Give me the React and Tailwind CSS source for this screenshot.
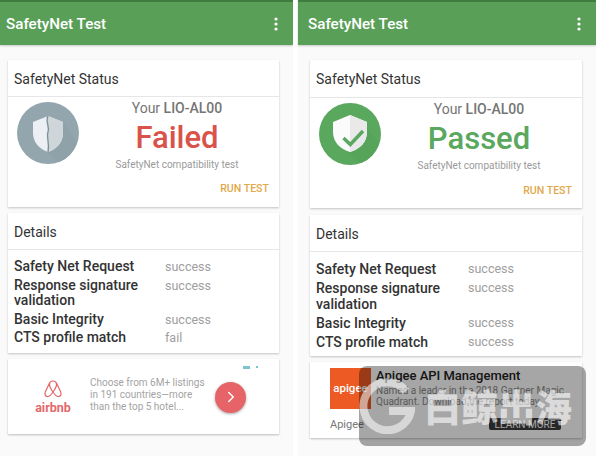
import React from 'react';
import { ChevronRight } from 'lucide-react';

const FailedIcon = () => (
    <svg width="62" height="62" viewBox="0 0 62 62" className="shrink-0">
        <circle cx="31" cy="31" r="31" fill="#93a6ae" />
        <path d="M46 20 L60 40 A31 31 0 0 1 42 60 L26 48 Z" fill="#8fa2aa" />
        <path d="M31 14 L46 20 V31 C46 40 40 47 31 50 C22 47 16 40 16 31 V20 Z" fill="#eceff3" />
        <path d="M31 14 L46 20 V31 C46 40 40 47 31 50 Z" fill="#cfd6da" />
        <path d="M31 14 C28 20 33 24 31 30 C29 35 33 41 31 50" fill="none" stroke="#7f929a" strokeWidth="1.4" />
    </svg>
);

const PassedIcon = () => (
    <svg width="62" height="62" viewBox="0 0 62 62" className="shrink-0">
        <circle cx="31" cy="31" r="31" fill="#5aa75e" />
        <path d="M46 22 L60 40 A31 31 0 0 1 42 60 L26 48 Z" fill="#56a35a" />
        <path d="M31 12 L48 19 V29 C48 39 41 46 31 49 C21 46 14 39 14 29 V19 Z" fill="#fbfbfb" />
        <path d="M31 12 L48 19 V29 C48 39 41 46 31 49 Z" fill="#e9e9e9" />
        <path d="M24.5 35 L31.3 41.5 L44 28" fill="none" stroke="#5aa75e" strokeWidth="3.4" />
    </svg>
);

const AdChoices = () => (
    <div className="flex justify-end gap-[6px] pr-[21px] pt-[7px] h-[12px]">
        <div className="w-[7px] h-[3px] bg-[#7cc4cf]" />
        <div className="w-[2px] h-[2px] bg-[#7cc4cf]" />
    </div>
);

const AirbnbAd = () => (
    <div className="h-[75px] bg-white shadow-[0_1px_2px_rgba(0,0,0,0.25)]">
        <AdChoices />
        <div className="flex items-center pl-[26px] pt-[6px]">
            <div className="flex flex-col items-center w-[38px] shrink-0">
                <svg width="18" height="19" viewBox="0 0 18 19" className="mb-[3px]">
                    <path d="M9 13 C6 9 5.5 7 5.5 5.5 C5.5 3.5 7 2 9 2 C11 2 12.5 3.5 12.5 5.5 C12.5 7 12 9 9 13 C7 16 4.5 18 3 17.5 C1 17 0.5 15 1.5 12.5 L5.5 4 M9 13 C11 16 13.5 18 15 17.5 C17 17 17.5 15 16.5 12.5 L12.5 4" fill="none" stroke="#e4686a" strokeWidth="1.2" />
                </svg>
                <span className="text-[12.5px] leading-[14px] font-bold text-[#e4686a]">airbnb</span>
            </div>
            <p className="ml-[18px] mb-[4px] w-[117px] text-[10px] leading-[12.2px] text-[#a3a3a3]">
                Choose from 6M+ listings in 191 countries—more than the top 5 hotel...
            </p>
            <div className="ml-[8px] w-[31px] h-[31px] rounded-full bg-[#e66467] flex items-center justify-center shadow-[0_1px_3px_rgba(0,0,0,0.35)]">
                <ChevronRight size={18} color="#ffffff" strokeWidth={2} />
            </div>
        </div>
    </div>
);

const ApigeeAd = () => (
    <div className="h-[76px] bg-white shadow-[0_1px_2px_rgba(0,0,0,0.25)] flex pl-[20px] pt-[6px]">
        <div className="w-[41px] shrink-0">
            <div className="h-[41px] bg-[#ee5a24] flex items-center justify-center">
                <span className="text-[11.5px] font-medium text-white">apigee</span>
            </div>
            <div className="mt-[9px] text-[11px] leading-[14px] text-[#777777]">Apigee</div>
        </div>
        <div className="ml-[5px] flex-1 pt-[1px]">
            <div className="text-[13px] leading-[14px] font-medium text-[#222222]">Apigee API Management</div>
            <p className="mt-[2px] whitespace-nowrap text-[10px] leading-[11px] text-[#8a8a8a]">
                Named a leader in the 2018 Gartner Magic<br />Quadrant. Download the report today.
            </p>
            <div className="mt-[11px] ml-[113px] w-[72px] h-[12px] rounded-[2px] bg-[#3d3d3d] flex items-center justify-center text-[10px] text-white">
                LEARN MORE
            </div>
        </div>
    </div>
);

const Card = ({ title, className, headClass, children }) => (
    <div className={`bg-white shadow-[0_1px_2px_rgba(0,0,0,0.22)] ${className}`}>
        <div className={`${headClass} flex items-center pl-[6px] pt-[2px] border-b border-[#e6e6e6] text-[14px] text-[#333333]`}>
            {title}
        </div>
        {children}
    </div>
);

const Panel = ({ width, titlePad, cardClass, statusClass, statusHead, runClass, detailsClass, rowLead, labelWidth, icon, result, resultClass, rows, ad }) => (
    <div className={`${width} h-full shrink-0 bg-[#fafafa]`}>
        <div className="h-[45px] pt-[1px] bg-[#5a9f58] border-t-2 border-[#3f7c40] shadow-[0_1px_2px_rgba(0,0,0,0.2)] flex items-center justify-between">
            <span className={`${titlePad} text-[15.2px] font-medium text-white`}>SafetyNet Test</span>
            <svg width="4" height="14" viewBox="0 0 4 14" className="mr-[15px]">
                <circle cx="2" cy="2" r="1.6" fill="#fff" />
                <circle cx="2" cy="7" r="1.6" fill="#fff" />
                <circle cx="2" cy="12" r="1.6" fill="#fff" />
            </svg>
        </div>
        <div className={`${cardClass} pt-[15px]`}>
            <Card title="SafetyNet Status" className={statusClass} headClass={statusHead}>
                <div className="flex pl-[9px] pt-[5px]">
                    {icon}
                    <div className="w-[196px] flex flex-col items-center">
                        <div className="text-[14px] leading-[16px] text-[#757575] mt-[-2px]">
                            Your <span className="font-medium">LIO-AL00</span>
                        </div>
                        <div className={`text-[31px] leading-[40px] font-medium mt-[2px] ${resultClass}`}>{result}</div>
                        <div className="text-[10px] leading-[14px] text-[#9a9a9a]">SafetyNet compatibility test</div>
                    </div>
                </div>
                <div className={`text-right pr-[10px] text-[10.6px] leading-[14px] font-medium text-[#e2a84a] ${runClass}`}>RUN TEST</div>
            </Card>
            <Card title="Details" className={detailsClass} headClass="h-[37px]">
                <div className="pl-[6px] pt-[9px] flex flex-col gap-[3px]">
                    {rows.map((row) => (
                        <div key={row.name} className="flex items-start">
                            <div className={`text-[14px] font-medium text-[#333333] ${labelWidth} ${rowLead}`}>{row.name}</div>
                            <div className={`text-[12.5px] text-[#9e9e9e] ${rowLead}`}>{row.value}</div>
                        </div>
                    ))}
                </div>
            </Card>
            {ad}
        </div>
    </div>
);

const failedRows = [
    { name: 'Safety Net Request', value: 'success' },
    { name: 'Response signature validation', value: 'success' },
    { name: 'Basic Integrity', value: 'success' },
    { name: 'CTS profile match', value: 'fail' },
];

const passedRows = [
    { name: 'Safety Net Request', value: 'success' },
    { name: 'Response signature validation', value: 'success' },
    { name: 'Basic Integrity', value: 'success' },
    { name: 'CTS profile match', value: 'success' },
];

export default function App() {
    return (
        <div className="relative flex w-[596px] h-[456px] overflow-hidden bg-white font-['Roboto',sans-serif]">
            <Panel
                width="w-[293px]"
                titlePad="pl-[6px]"
                cardClass="pl-[8px] pr-[14px]"
                statusClass="h-[147px] mb-[6px]"
                statusHead="h-[37px]"
                runClass="mt-[10px]"
                detailsClass="h-[140px] mb-[6px]"
                rowLead="leading-[15.5px]"
                labelWidth="w-[151px]"
                icon={<FailedIcon />}
                result="Failed"
                resultClass="text-[#d9534a]"
                rows={failedRows}
                ad={<AirbnbAd />}
            />
            <div className="w-[5px] shrink-0 bg-white" />
            <Panel
                width="w-[298px]"
                titlePad="pl-[10px]"
                cardClass="pl-[12px] pr-[14px]"
                statusClass="h-[148px] mb-[7px]"
                statusHead="h-[38px]"
                runClass="mt-[11px]"
                detailsClass="h-[141px] mb-[6px]"
                rowLead="leading-[16px]"
                labelWidth="w-[152px]"
                icon={<PassedIcon />}
                result="Passed"
                resultClass="text-[#5aa75e]"
                rows={passedRows}
                ad={<ApigeeAd />}
            />
            {/* watermark over the second ad */}
            <div className="absolute left-[359px] top-[366px] w-[227px] h-[80px] rounded-[8px] bg-black/35 flex items-center">
                <svg width="56" height="56" viewBox="0 0 56 56" className="shrink-0">
                    <path d="M47 13 A24 24 0 1 0 52 33 H30" fill="none" stroke="#ffffff" strokeOpacity="0.55" strokeWidth="8" />
                </svg>
                <span className="ml-[9px] text-[37px] leading-[40px] font-black text-white/60 font-['Noto_Sans_CJK_SC',sans-serif]">白鲸出海</span>
            </div>
        </div>
    );
}
